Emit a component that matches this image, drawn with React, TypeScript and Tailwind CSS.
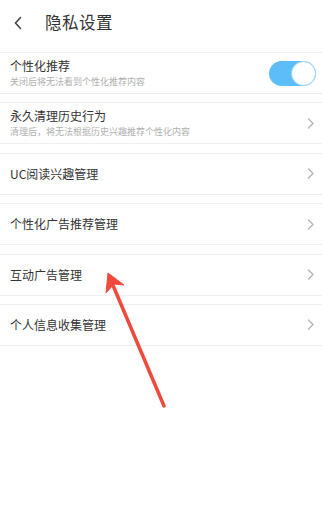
import React from "react";

const font = { fontFamily: '"Noto Sans CJK SC", "Noto Sans", sans-serif' };

function Chevron() {
  return (
    <svg width="8" height="11" viewBox="0 0 8 11" className="shrink-0">
      <path d="M1.5 1 L6 5.5 L1.5 10" fill="none" stroke="#b4b4b4" strokeWidth="1.4" strokeLinecap="round" strokeLinejoin="round" />
    </svg>
  );
}

function Row({ title, sub, right }: { title: string; sub?: string; right?: React.ReactNode }) {
  return (
    <div className="h-[42px] border-y border-[#f0f0f0] bg-white flex items-center pl-[10px] pr-[7px] box-border">
      <div className="flex-1 flex flex-col justify-center">
        <div className="text-[12px] leading-[16px] text-[#333]">{title}</div>
        {sub && <div className="text-[9px] leading-[13px] text-[#b0b0b0] mt-[1px]">{sub}</div>}
      </div>
      {right ?? <Chevron />}
    </div>
  );
}

function Toggle() {
  return (
    <div className="w-[47px] h-[25px] rounded-full bg-[#5cbdf9] relative mr-[-1px]">
      <div className="absolute right-0 top-0 w-[25px] h-[25px] rounded-full bg-white border border-[#9fd6f7] box-border" />
    </div>
  );
}

export default function App() {
  return (
    <div className="relative w-[322px] h-[527px] bg-white overflow-hidden" style={font}>
      <div className="h-[52px] flex items-center">
        <svg width="10" height="14" viewBox="0 0 10 14" className="ml-[13px] mt-[-6px]">
          <path d="M7.5 1.5 L2.5 7 L7.5 12.5" fill="none" stroke="#444" strokeWidth="1.6" strokeLinecap="round" strokeLinejoin="round" />
        </svg>
        <div className="ml-[22px] mt-[-7px] text-[16.5px] text-[#333] tracking-[0.5px]">隐私设置</div>
      </div>
      <div className="flex flex-col gap-[8.4px]">
        <Row title="个性化推荐" sub="关闭后将无法看到个性化推荐内容" right={<Toggle />} />
        <Row title="永久清理历史行为" sub="清理后，将无法根据历史兴趣推荐个性化内容" />
        <Row title="UC阅读兴趣管理" />
        <Row title="个性化广告推荐管理" />
        <Row title="互动广告管理" />
        <Row title="个人信息收集管理" />
      </div>
      <svg className="absolute inset-0 pointer-events-none" width="322" height="527" viewBox="0 0 322 527">
        <line x1="164" y1="406" x2="112" y2="283" stroke="#ef4a3c" strokeWidth="3.5" strokeLinecap="round" />
        <polygon points="108,273 124,285 114,284 106,293" fill="#ef4a3c" stroke="#ef4a3c" strokeWidth="1" strokeLinejoin="round" />
      </svg>
    </div>
  );
}
